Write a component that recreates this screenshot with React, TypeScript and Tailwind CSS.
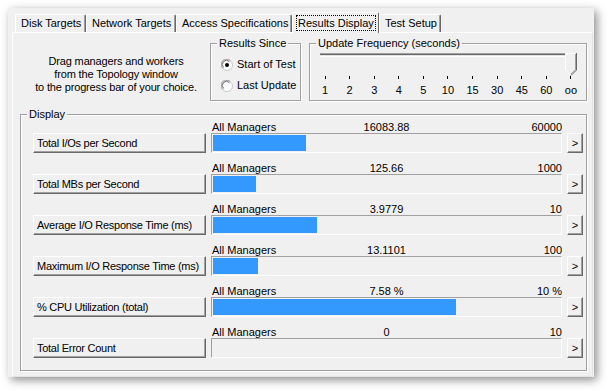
import React from 'react'

const rows = [
  { label: 'Total I/Os per Second', value: '16083.88', max: '60000', fill: 93 },
  { label: 'Total MBs per Second', value: '125.66', max: '1000', fill: 43 },
  { label: 'Average I/O Response Time (ms)', value: '3.9779', max: '10', fill: 104 },
  { label: 'Maximum I/O Response Time (ms)', value: '13.1101', max: '100', fill: 45 },
  { label: '% CPU Utilization (total)', value: '7.58 %', max: '10 %', fill: 243 },
  { label: 'Total Error Count', value: '0', max: '10', fill: 0 },
]

const ticks = ['1', '2', '3', '4', '5', '10', '15', '30', '45', '60', 'oo']

const raised =
  'bg-[#f0f0f0] border border-t-white border-l-white border-r-[#696969] border-b-[#696969] shadow-[inset_-1px_-1px_0_#a0a0a0]'

function Tab({ label, width, selected }: { label: string; width: number; selected?: boolean }) {
  if (selected) {
    return (
      <div
        style={{ width }}
        className="relative z-10 -mb-px h-[21px] flex-none bg-[#f0f0f0] border-t border-l border-r border-t-white border-l-white border-r-[#696969] rounded-t-[2px] pl-[3px] pt-[2px]"
      >
        <span className="inline-block border border-dotted border-black px-[1px] leading-[14px]">{label}</span>
      </div>
    )
  }
  return (
    <div
      style={{ width }}
      className="h-[18px] flex-none border-t border-l border-r border-t-white border-l-white border-r-[#696969] shadow-[inset_-1px_0_0_#a0a0a0] rounded-t-[2px] pl-[5px] leading-[16px]"
    >
      {label}
    </div>
  )
}

function Radio({ checked }: { checked?: boolean }) {
  return (
    <svg width="12" height="12" viewBox="0 0 12 12" className="flex-none">
      <circle cx="6" cy="6" r="5.5" fill="#ffffff" stroke="#c8c8c8" />
      <path d="M1.6 9.4 A5 5 0 0 1 9.4 1.6" fill="none" stroke="#a0a0a0" />
      <path d="M2.6 8.4 A3.8 3.8 0 0 1 8.4 2.6" fill="none" stroke="#696969" />
      {checked && <circle cx="6" cy="6" r="2" fill="#000000" />}
    </svg>
  )
}

function Group({
  title,
  className,
  children,
}: {
  title: string
  className: string
  children: React.ReactNode
}) {
  return (
    <fieldset
      className={`flex-none border border-[#a0a0a0] shadow-[1px_1px_0_#ffffff,inset_1px_1px_0_#ffffff] ${className}`}
    >
      <legend className="ml-[6px] px-[2px] bg-[#f0f0f0] leading-[13px]">{title}</legend>
      {children}
    </fieldset>
  )
}

export default function App() {
  return (
    <div className="w-[608px] h-[391px] bg-white pt-[8px] pl-[8px] text-[11px] text-black font-['Liberation_Sans',Arial,sans-serif]">
      <div className="w-[586px] h-[369px] bg-[#f0f0f0] pt-[4px] pl-[4px] shadow-[3px_3px_9px_rgba(0,0,0,0.45)]">
        {/* Tabs */}
        <div className="h-[20px] flex items-end pl-[3px]">
          <Tab label="Disk Targets" width={71} />
          <Tab label="Network Targets" width={90} />
          <Tab label="Access Specifications" width={116} />
          <Tab label="Results Display" width={87} selected />
          <Tab label="Test Setup" width={62} />
        </div>

        {/* Page */}
        <div className="w-[581px] h-[345px] border border-t-white border-l-white border-r-[#e3e3e3] border-b-[#e3e3e3] pt-[4px] pl-[7px]">
          <div className="flex">
            <div className="w-[190px] flex-none pt-[18px] pl-[2px] text-center leading-[13px] tracking-[-0.15px]">
              Drag managers and workers
              <br />
              from the Topology window
              <br />
              to the progress bar of your choice.
            </div>

            <Group title="Results Since" className="w-[91px] h-[64px]">
              <div className="pl-[10px] pt-[8px] flex flex-col gap-[8px]">
                <label className="flex items-center gap-[4px] h-[13px]">
                  <Radio checked />
                  <span>Start of Test</span>
                </label>
                <label className="flex items-center gap-[4px] h-[13px]">
                  <Radio />
                  <span>Last Update</span>
                </label>
              </div>
            </Group>

            <Group title="Update Frequency (seconds)" className="ml-[8px] w-[278px] h-[64px]">
              <div className="pl-[10px] -mt-[5px]">
                <div className="relative h-[22px] w-[256px]">
                  <div className="mt-[8px] w-[248px] h-[4px] border-t border-[#a0a0a0] border-b border-b-white bg-[#e3e3e3] shadow-[inset_0_1px_0_#696969]" />
                  <svg width="12" height="23" viewBox="0 0 12 23" className="absolute left-[245px] top-0">
                    <path d="M0.5 17 V0.5 H11 V17 L6 22 Z" fill="#f0f0f0" />
                    <path d="M0.5 17 V0.5 H10.5" fill="none" stroke="#ffffff" />
                    <path d="M11.5 0 V17 L6 22.5" fill="none" stroke="#696969" />
                    <path d="M10.5 1 V16.6 L6 21" fill="none" stroke="#a0a0a0" />
                    <path d="M0.5 17 L5 21.5" fill="none" stroke="#ffffff" />
                  </svg>
                </div>
                <div className="mt-[1px] h-[3px] w-[256px] flex justify-between">
                  {ticks.map((t) => (
                    <div key={t} className="w-[10px] flex justify-center">
                      <div className="w-px h-[3px] bg-black" />
                    </div>
                  ))}
                </div>
                <div className="mt-[5px] h-[13px] w-[256px] flex justify-between leading-[13px]">
                  {ticks.map((t) => (
                    <div key={t} className="w-[10px] flex justify-center whitespace-nowrap">
                      {t}
                    </div>
                  ))}
                </div>
              </div>
            </Group>
          </div>

          <Group title="Display" className="mt-[7px] w-[567px] h-[263px]">
            <div className="pl-[12px] flex flex-col gap-[9px]">
              {rows.map((r) => (
                <div key={r.label} className="grid grid-cols-[173px_351px_16px] grid-rows-[12px_20px] gap-x-[5px]">
                  <div />
                  <div className="grid grid-cols-[1fr_auto_1fr] leading-[12px] whitespace-nowrap">
                    <span className="pl-px">All Managers</span>
                    <span className="text-center">{r.value}</span>
                    <span className="text-right">{r.max}</span>
                  </div>
                  <div />
                  <div className={`${raised} h-[20px] pl-[3px] leading-[18px] whitespace-nowrap tracking-[-0.27px]`}>
                    {r.label}
                  </div>
                  <div className="h-[20px] border border-t-[#a0a0a0] border-l-[#a0a0a0] border-r-white border-b-white p-px">
                    {r.fill > 0 && <div className="h-full bg-[#3399ff]" style={{ width: r.fill }} />}
                  </div>
                  <div className={`${raised} h-[20px] flex items-center justify-center leading-none`}>&gt;</div>
                </div>
              ))}
            </div>
          </Group>
        </div>
      </div>
    </div>
  )
}
